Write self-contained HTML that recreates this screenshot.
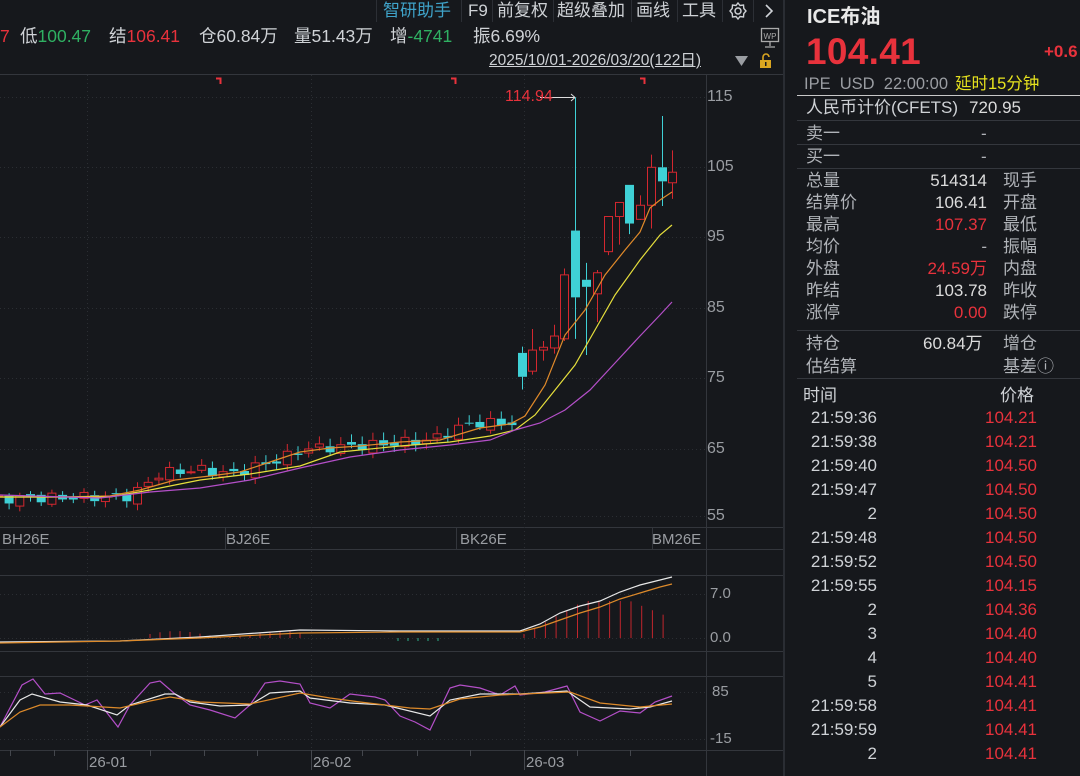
<!DOCTYPE html>
<html><head><meta charset="utf-8"><style>
html,body{margin:0;padding:0;background:#16181c;width:1080px;height:776px;overflow:hidden;font-family:"Liberation Sans","Noto Sans CJK SC",sans-serif;}
.a{position:absolute;white-space:nowrap;line-height:20px;}
.t{font-size:17px;color:#cfd2d6;top:1px;}
.t2{font-size:17.5px;color:#cfd2d6;top:26px;}
.r{color:#e8323c}.g{color:#2fb062}.w{color:#dcdcdc}.l{color:#b0b3b8}
.rp{font-size:17px}
</style></head><body>
<div class="a" style="left:0;top:0;width:783px;height:776px;background:#16181c"></div>
<!-- toolbar -->
<div class="a t" style="left:383px;color:#3fa3c9">智研助手</div>
<div class="a t" style="left:468px">F9</div>
<div class="a t" style="left:497px">前复权</div>
<div class="a t" style="left:557px">超级叠加</div>
<div class="a t" style="left:636px">画线</div>
<div class="a t" style="left:682px">工具</div>
<div class="a" style="left:376px;top:0;width:1px;height:22px;background:#2c2f35"></div>
<div class="a" style="left:461px;top:0;width:1px;height:22px;background:#2c2f35"></div>
<div class="a" style="left:492px;top:0;width:1px;height:22px;background:#2c2f35"></div>
<div class="a" style="left:553px;top:0;width:1px;height:22px;background:#2c2f35"></div>
<div class="a" style="left:631px;top:0;width:1px;height:22px;background:#2c2f35"></div>
<div class="a" style="left:677px;top:0;width:1px;height:22px;background:#2c2f35"></div>
<div class="a" style="left:722px;top:0;width:1px;height:22px;background:#2c2f35"></div>
<div class="a" style="left:753px;top:0;width:1px;height:22px;background:#2c2f35"></div>
<svg class="a" style="left:728px;top:1px" width="20" height="20" viewBox="0 0 20 20"><circle cx="10" cy="10" r="3" fill="none" stroke="#cfd2d6" stroke-width="1.5"/><path d="M10 2 L12 4.5 L15.5 4 L15.8 7.5 L18 10 L15.8 12.5 L15.5 16 L12 15.5 L10 18 L8 15.5 L4.5 16 L4.2 12.5 L2 10 L4.2 7.5 L4.5 4 L8 4.5 Z" fill="none" stroke="#cfd2d6" stroke-width="1.4"/></svg>
<svg class="a" style="left:762px;top:2px" width="14" height="18"><path d="M4 3 L10 9 L4 15" fill="none" stroke="#cfd2d6" stroke-width="1.6"/></svg>
<!-- second row -->
<div class="a t2" style="left:0"><span class="r">7</span></div>
<div class="a t2" style="left:20px">低<span class="g">100.47</span></div>
<div class="a t2" style="left:109px">结<span class="r">106.41</span></div>
<div class="a t2" style="left:199px">仓60.84万</div>
<div class="a t2" style="left:294px">量51.43万</div>
<div class="a t2" style="left:390px">增<span class="g">-4741</span></div>
<div class="a t2" style="left:473px">振6.69%</div>
<svg class="a" style="left:760px;top:27px" width="20" height="22"><rect x="1.5" y="1.5" width="17" height="13" fill="none" stroke="#aaa" stroke-width="1.3"/><text x="10" y="12" font-size="8" fill="#aaa" text-anchor="middle" font-family="Liberation Sans">WP</text><path d="M10 15 V19 M5 20 H15" stroke="#aaa" stroke-width="1.3"/></svg>
<div class="a" style="top:51px;left:489px;font-size:15.5px;color:#cfd2d6;text-decoration:underline">2025/10/01-2026/03/20(122日)</div>
<svg class="a" style="left:735px;top:55px" width="14" height="12"><path d="M0 1 H13 L6.5 11 Z" fill="#9a9da2"/></svg>
<svg class="a" style="left:759px;top:53px" width="14" height="16"><path d="M4 7 V4 A3 3 0 0 1 10 4" fill="none" stroke="#d9a520" stroke-width="1.6"/><rect x="1" y="7" width="11" height="8" fill="#d9a520"/><rect x="6" y="9" width="1.5" height="4" fill="#16181c"/></svg>
<!-- charts -->
<svg id="ch" class="a" style="left:0;top:0" width="783" height="776"></svg>
<div class="a" style="left:707px;top:87px;font-size:16px;color:#9a9da2">115</div>
<div class="a" style="left:707px;top:157px;font-size:16px;color:#9a9da2">105</div>
<div class="a" style="left:707px;top:227px;font-size:16px;color:#9a9da2">95</div>
<div class="a" style="left:707px;top:298px;font-size:16px;color:#9a9da2">85</div>
<div class="a" style="left:707px;top:368px;font-size:16px;color:#9a9da2">75</div>
<div class="a" style="left:707px;top:439px;font-size:16px;color:#9a9da2">65</div>
<div class="a" style="left:707px;top:506px;font-size:16px;color:#9a9da2">55</div>
<div class="a" style="left:505px;top:87px;font-size:16px;color:#e8323c">114.94</div>
<div class="a" style="left:2px;top:530px;font-size:15px;color:#9a9da2">BH26E</div>
<div class="a" style="left:226px;top:530px;font-size:15px;color:#9a9da2">BJ26E</div>
<div class="a" style="left:460px;top:530px;font-size:15px;color:#9a9da2">BK26E</div>
<div class="a" style="left:652px;top:530px;font-size:15px;color:#9a9da2">BM26E</div>
<div class="a" style="left:710px;top:584px;font-size:15px;color:#9a9da2">7.0</div>
<div class="a" style="left:710px;top:628px;font-size:15px;color:#9a9da2">0.0</div>
<div class="a" style="left:712px;top:682px;font-size:15px;color:#9a9da2">85</div>
<div class="a" style="left:710px;top:729px;font-size:15px;color:#9a9da2">-15</div>
<div class="a" style="left:89px;top:753px;font-size:15px;color:#9a9da2">26-01</div>
<div class="a" style="left:313px;top:753px;font-size:15px;color:#9a9da2">26-02</div>
<div class="a" style="left:526px;top:753px;font-size:15px;color:#9a9da2">26-03</div>
<!-- right panel -->
<div class="a" style="left:783px;top:0;width:2px;height:776px;background:#2a2d33"></div>
<div class="a" style="left:807px;top:5px;font-size:20px;line-height:24px;font-weight:bold;color:#e8e8e8">ICE布油</div>
<div class="a" style="left:806px;top:32px;font-size:37px;line-height:40px;font-weight:bold;color:#e8323c;letter-spacing:0.3px">104.41</div>
<div class="a" style="left:1044px;top:42px;font-size:17px;font-weight:bold;color:#e8323c">+0.6</div>
<div class="a" style="left:804px;top:74px;font-size:16.5px;color:#9a9da2">IPE&nbsp; USD&nbsp; 22:00:00</div>
<div class="a" style="left:955px;top:74px;font-size:16.5px;color:#e6e21e">延时15分钟</div>
<div class="a" style="left:797px;top:95px;width:283px;height:1px;background:#c8c8c8"></div>
<div class="a rp l" style="left:806px;top:98px;color:#cfd2d6">人民币计价(CFETS)</div>
<div class="a rp w" style="left:969px;top:98px">720.95</div>
<div class="a" style="left:797px;top:120px;width:283px;height:1px;background:#34373d"></div>
<div class="a rp l" style="left:806px;top:124px">卖一</div><div class="a rp l" style="left:981px;top:124px">-</div>
<div class="a" style="left:797px;top:144px;width:283px;height:1px;background:#34373d"></div>
<div class="a rp l" style="left:806px;top:147px">买一</div><div class="a rp l" style="left:981px;top:147px">-</div>
<div class="a" style="left:797px;top:168px;width:283px;height:1px;background:#34373d"></div>
<div class="a rp l" style="left:806px;top:170px;line-height:22px">总量<br>结算价<br>最高<br>均价<br>外盘<br>昨结<br>涨停</div>
<div class="a rp" style="left:900px;width:87px;text-align:right;top:170px;line-height:22px"><span class="w">514314</span><br><span class="w">106.41</span><br><span class="r">107.37</span><br><span class="l">-</span><br><span class="r">24.59万</span><br><span class="w">103.78</span><br><span class="r">0.00</span></div>
<div class="a rp l" style="left:1003px;top:170px;line-height:22px">现手<br>开盘<br>最低<br>振幅<br>内盘<br>昨收<br>跌停</div>
<div class="a" style="left:797px;top:330px;width:283px;height:1px;background:#34373d"></div>
<div class="a rp l" style="left:806px;top:332px;line-height:23px">持仓<br>估结算</div>
<div class="a rp w" style="left:923px;top:332px;line-height:23px">60.84万</div>
<div class="a rp l" style="left:1003px;top:332px;line-height:23px">增仓<br>基差&#9432;</div>
<div class="a" style="left:797px;top:378px;width:283px;height:1px;background:#34373d"></div>
<div class="a rp l" style="left:803px;top:386px;color:#cfd2d6">时间</div>
<div class="a rp l" style="left:1000px;top:386px;color:#cfd2d6">价格</div>
<div class="a rp" style="left:800px;top:406px;width:77px;text-align:right;line-height:24px;color:#cfd2d6">21:59:36<br>21:59:38<br>21:59:40<br>21:59:47<br>2<br>21:59:48<br>21:59:52<br>21:59:55<br>2<br>3<br>4<br>5<br>21:59:58<br>21:59:59<br>2</div>
<div class="a rp r" style="left:960px;top:406px;width:77px;text-align:right;line-height:24px">104.21<br>104.21<br>104.50<br>104.50<br>104.50<br>104.50<br>104.50<br>104.15<br>104.36<br>104.40<br>104.40<br>104.41<br>104.41<br>104.41<br>104.41</div>
<script>
var s=document.getElementById('ch'),h='';
function Y(p){return 97+(115-p)*7.03;}
function L(x1,y1,x2,y2,c,d){h+='<line x1="'+x1+'" y1="'+y1+'" x2="'+x2+'" y2="'+y2+'" stroke="'+c+'" stroke-width="1"'+(d?' stroke-dasharray="1 3"':'')+'/>';}
L(0,74.5,783,74.5,'#33363c');L(706.5,74,706.5,776,'#33363c');
L(0,527.5,783,527.5,'#33363c');L(0,549.5,783,549.5,'#33363c');
L(0,575.5,783,575.5,'#33363c');L(0,651.5,783,651.5,'#33363c');
L(0,676.5,783,676.5,'#33363c');L(0,750.5,783,750.5,'#33363c');
[225,456,652].forEach(function(x){L(x+.5,527,x+.5,550,'#33363c')});
[97,167,237,308,378,449,516,594,638,692,739].forEach(function(y){L(0,y+.5,706,y+.5,'#2b2e33',1)});
[87,311,524].forEach(function(x){L(x+.5,75,x+.5,750,'#2b2e33',1);L(x+.5,750,x+.5,770,'#44474d');});
[10,54,150,204,257,362,417,470,577,630].forEach(function(x){L(x+.5,750,x+.5,756,'#44474d')});
[220,455,644].forEach(function(x){h+='<path d="M'+(x-4)+' 78.5 H'+(x+.5)+' V84" stroke="#e8323c" stroke-width="2" fill="none"/>';});
h+='<path d="M540 97.5 H575 M571 94 L575 97.5 L571 101" stroke="#ddd" stroke-width="1" fill="none"/>';
var kp=[[-20,57.8],[130,58.2],[160,61.5],[200,62],[230,61.3],[280,63.5],[305,65],[340,65.2],[380,65.6],[430,66.2],[470,68.6],[512,68.6]];
function interp(x){for(var i=0;i<kp.length-1;i++){if(x<=kp[i+1][0]){var t=(x-kp[i][0])/(kp[i+1][0]-kp[i][0]);return kp[i][1]+t*(kp[i+1][1]-kp[i][1]);}}return 68.6;}
var C=[];var prev=57.8;
for(var i=0;i<50;i++){var x=672-(64-i)*10.7;var c=interp(x)+Math.sin(i*2.3)*0.7;var o=prev+Math.sin(i*1.7)*0.4;var hi=Math.max(o,c)+0.3+Math.abs(Math.sin(i*3.1))*0.8;var lo=Math.min(o,c)-0.3-Math.abs(Math.cos(i*2.9))*0.6;C.push([x,o,c,hi,lo]);prev=c;}
var late=[[522,78.6,75.2,79.5,73.4],[532,76,79,82,75.5],[543,79,79.4,80.3,77.5],[554,79.3,81,82.6,78.5],[564,80.6,89.7,90.6,80.3],[575,96,86.5,114.94,80.6],[586,89,88,91.4,78.3],[597,87,90,90.4,83],[608,93,98,98,92.5],[619,98,100,100,94],[629,102.5,97,102.5,95.5],[640,97.6,99.6,101,97.5],[651,99.6,105,106.8,96.3],[662,105,103,112.3,99.5],[672,102.8,104.3,107.4,100.5]];
late.forEach(function(a){C.push(a)});
C.forEach(function(k){var x=k[0],o=k[1],c=k[2],up=c>=o,col=up?'#d3272f':'#3fd1d6';var yt=Y(Math.max(o,c)),yb=Y(Math.min(o,c));if(yb-yt<1)yb=yt+1;
L(x+.5,Y(k[3]),x+.5,yt,col);L(x+.5,yb,x+.5,Y(k[4]),col);
if(up)h+='<rect x="'+(x-3.5)+'" y="'+yt+'" width="8" height="'+(yb-yt)+'" fill="none" stroke="'+col+'" stroke-width="1"/>';
else h+='<rect x="'+(x-4)+'" y="'+yt+'" width="9" height="'+(yb-yt)+'" fill="'+col+'"/>';});
function P(pts,c,w){h+='<polyline points="'+pts+'" fill="none" stroke="'+c+'" stroke-width="'+(w||1.2)+'"/>';}
P('0,497 60,497 110,496 140,490 175,480 210,476 240,472 270,462 300,452 330,448 360,446 400,442 440,440 480,428 510,424 525,416 545,385 565,335 585,310 605,275 625,250 640,232 650,208 660,200 672,192','#e08a2a');
P('0,497 60,497 110,497 150,490 200,480 250,474 300,466 340,452 400,446 450,442 490,436 515,430 535,415 555,390 575,365 595,330 615,295 640,260 660,235 672,225','#e6df3c');
P('0,495 100,498 150,492 200,488 250,480 300,468 350,457 400,450 450,445 490,440 515,430 540,423 565,410 590,390 615,363 640,336 660,315 672,302','#b44fc8');
for(var x=524;x<=672;x+=10.7){var v=Math.min(1,(x-524)/60)*(x>630?(1-(x-630)/80):1);L(x,638,x,638-v*33-4,'#c2262d');}
[150,160,170,180,190,200,210,220,230,240,250,260,270,280,290,300].forEach(function(x,i){L(x,638,x,634-Math.sin(i/5*3)*3,'#c2262d')});
[398,408,418,428,438].forEach(function(x){L(x,638,x,641,'#2fb08a')});
P('0,642 120,641 140,640 200,637 300,630 400,631 520,631 540,624 560,613 580,606 600,601 620,592 640,585 660,580 672,577','#e8e8e8');
P('0,643 120,641 200,638 300,633 400,632 520,632 540,627 560,620 580,613 600,607 620,599 640,593 660,587 672,584','#dd8a2a');
P('0,727 22,685 33,679 45,694 60,693 85,705 97,700 118,727 130,705 150,683 160,681 175,694 190,705 210,710 235,718 250,705 265,683 280,681 300,684 310,703 330,708 350,694 375,697 385,700 400,716 415,722 430,730 450,688 460,685 480,688 500,695 515,686 520,695 545,692 567,686 580,712 600,721 620,711 640,713 655,702 672,696','#b44fc8');
P('0,727 20,700 32,694 60,702 87,705 117,715 130,705 165,694 175,694 190,702 220,706 250,705 270,693 300,691 310,698 350,703 385,705 430,716 450,700 480,694 520,694 567,691 590,707 630,709 650,707 672,701','#e8e8e8');
P('0,727 20,712 40,705 70,705 120,708 150,701 170,697 200,702 250,704 300,693 330,698 360,702 410,708 430,709 460,699 500,695 570,692 600,703 640,707 672,704','#dd8a2a');
s.innerHTML=h;
</script>
</body></html>
